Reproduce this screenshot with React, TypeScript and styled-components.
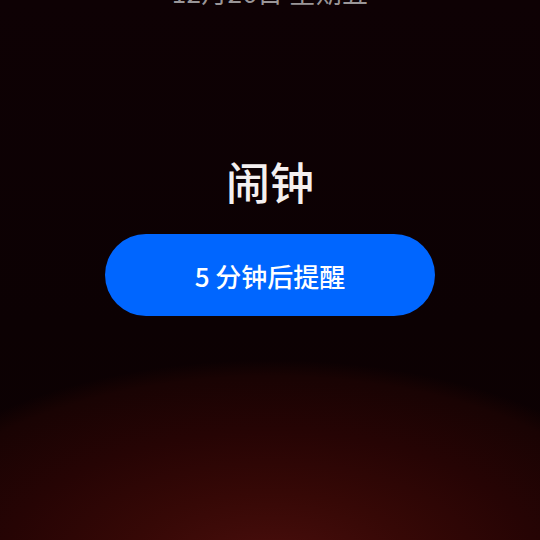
import React from 'react';
import styled, { createGlobalStyle } from 'styled-components';

const GlobalStyle = createGlobalStyle`
  html, body {
    margin: 0;
    padding: 0;
    background: #0d0103;
  }
  body {
    font-family: "Noto Sans CJK SC", "Noto Sans", sans-serif;
  }
`;

const Screen = styled.div`
  width: 540px;
  height: 540px;
  overflow: hidden;
  display: flex;
  flex-direction: column;
  align-items: center;
  background:
    radial-gradient(ellipse 410px 205px at 50% 565px, #4a0e0c 0%, #360806 35%, #260404 65%, #190303 92%, rgba(16, 2, 3, 0) 100%),
    linear-gradient(180deg, #0e0104 0%, #0c0103 60%, #0d0102 100%);
`;

const DateLine = styled.div`
  margin-top: -24px;
  font-size: 26px;
  line-height: 32px;
  color: #9a9698;
  letter-spacing: 0.3px;
`;

const Title = styled.h1`
  margin: 145px 0 0;
  font-size: 44px;
  line-height: 56px;
  font-weight: 500;
  color: #f4f0f0;
`;

const SnoozeButton = styled.button`
  margin-top: 25px;
  width: 330px;
  height: 82px;
  border: none;
  border-radius: 41px;
  background: #0066ff;
  color: #ffffff;
  font-family: "Noto Sans CJK SC", "Noto Sans", sans-serif;
  font-size: 26px;
  font-weight: 500;
  cursor: pointer;
`;

export default function App() {
  return (
    <>
      <GlobalStyle />
      <Screen>
        <DateLine>12月26日 星期五</DateLine>
        <Title>闹钟</Title>
        <SnoozeButton>5 分钟后提醒</SnoozeButton>
      </Screen>
    </>
  );
}
